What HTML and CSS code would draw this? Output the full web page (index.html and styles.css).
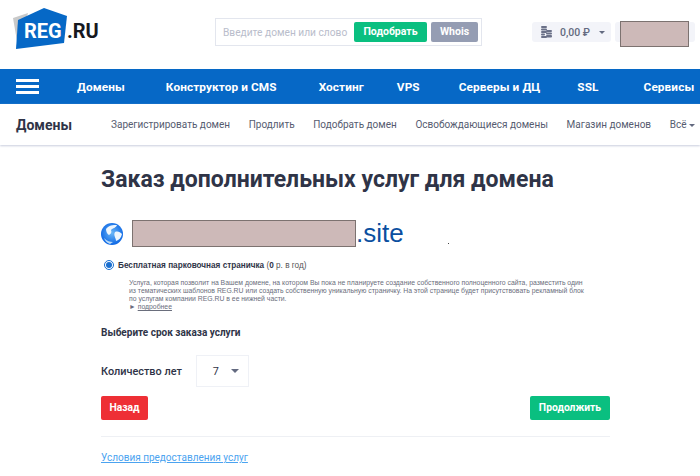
FILE: index.html
```html
<!DOCTYPE html>
<html lang="en">
<head>
  <meta charset="UTF-8">
  <meta name="viewport" content="width=device-width, initial-scale=1.0">
  <title>REG.RU</title>
  <link rel="stylesheet" href="styles.css">
</head>
<body>
  <header class="top">
    <svg class="logo" width="90" height="44" viewBox="0 0 90 44">
      <path d="M1 10 L16 5 L6 39 Z" fill="#c9c9c9"/>
      <path d="M6 12 L32 0 L55 8 L52 35 L4 41 Z" fill="#0668c6"/>
      <text x="12" y="30" class="logo-reg">REG</text>
      <text x="55" y="30" class="logo-ru">.RU</text>
    </svg>
    <form class="search">
      <span class="search-hint">Введите домен или слово</span>
      <span class="btn btn-green btn-small">Подобрать</span>
      <span class="btn btn-grey btn-small">Whois</span>
    </form>
    <div class="balance">
      <svg width="11" height="12" viewBox="0 0 11 12">
        <g fill="#6b7188">
          <rect x="0" y="0" width="6" height="2" rx="1"/>
          <rect x="0" y="2.5" width="6" height="2" rx="1"/>
          <rect x="0" y="5" width="6" height="2" rx="1"/>
          <rect x="0" y="7.5" width="4" height="2" rx="1"/>
          <rect x="0" y="10" width="6" height="2" rx="1"/>
          <rect x="5" y="4" width="6" height="2" rx="1"/>
          <rect x="5" y="6.5" width="6" height="2" rx="1"/>
          <rect x="5" y="9" width="6" height="2.5" rx="1"/>
        </g>
      </svg>
      <span>0,00 ₽</span>
      <i class="caret"></i>
    </div>
    <div class="user"><div class="mask mask-user"></div></div>
  </header>

  <nav class="mainnav">
    <div class="burger"><i></i><i></i><i></i></div>
    <div class="mainnav-items">
      <a>Домены</a>
      <a class="wider">Конструктор и CMS</a>
      <a class="tight">Хостинг</a>
      <a class="wide">VPS</a>
      <a class="mid">Серверы и ДЦ</a>
      <a class="widest">SSL</a>
      <a>Сервисы</a>
    </div>
  </nav>

  <nav class="subnav">
    <b>Домены</b>
    <div class="subnav-items">
      <a>Зарегистрировать домен</a>
      <a>Продлить</a>
      <a>Подобрать домен</a>
      <a>Освобождающиеся домены</a>
      <a>Магазин доменов</a>
      <a>Всё <i class="caret caret-dark"></i></a>
    </div>
  </nav>

  <main class="content">
    <h1>Заказ дополнительных услуг для домена</h1>

    <div class="domain">
      <svg class="globe" width="22" height="22" viewBox="0 0 22 22">
        <defs>
          <radialGradient id="globeFill" cx="0.5" cy="0.45" r="0.55">
            <stop offset="0" stop-color="#6db8f7"/>
            <stop offset="1" stop-color="#0c66e4"/>
          </radialGradient>
        </defs>
        <circle cx="11" cy="11" r="11" fill="url(#globeFill)"/>
        <path d="M5 6 C8 2 12 2 16 2 C15 5 12 5 10 7 C11 9 10 11 8 12 C6 11 5 8 5 6 Z" fill="#eef6fd"/>
        <path d="M14 9 C17 8 19 9 21 11 C20 15 18 17 15 18 C15 15 12 12 14 9 Z" fill="#eef6fd"/>
        <path d="M3 15 C6 18 9 19 12 19 L9 21 C6 20 4 18 3 15 Z" fill="#bcdcf8"/>
      </svg>
      <div class="mask mask-domain"></div>
      <span class="domain-zone">.site</span>
      <i class="speck"></i>
    </div>

    <label class="option">
      <input type="radio" checked>
      <span><b>Бесплатная парковочная страничка</b> (<b>0</b> р. в год)</span>
    </label>
    <div class="option-text">
      Услуга, которая позволит на Вашем домене, на котором Вы пока не планируете создание собственного полноценного сайта, разместить один<br>
      из тематических шаблонов REG.RU или создать собственную уникальную страничку. На этой странице будет присутствовать рекламный блок<br>
      по услугам компании REG.RU в ее нижней части.<br>
      <span class="more">► <u>подробнее</u></span>
    </div>

    <h3>Выберите срок заказа услуги</h3>

    <div class="years">
      <span>Количество лет</span>
      <div class="select">7 <i class="caret caret-big"></i></div>
    </div>

    <div class="actions">
      <span class="btn btn-red">Назад</span>
      <span class="btn btn-green">Продолжить</span>
    </div>

    <hr>
    <a class="terms">Условия предоставления услуг</a>
  </main>
</body>
</html>
```

FILE: styles.css
```css
body {
  margin: 0;
  height: 476px;
  overflow: hidden;
  background: #fff;
  font-family: Roboto, "Liberation Sans", sans-serif;
  color: #2f3447;
}
.top {
  display: flex;
  align-items: flex-start;
  height: 69px;
}
.logo {
  flex-shrink: 0;
  margin: 8px 0 0 12px;
}
.logo-reg {
  font: 700 20px Roboto, sans-serif;
  fill: #fff;
}
.logo-ru {
  font: 700 20px Roboto, sans-serif;
  fill: #16181f;
}
.search {
  display: flex;
  align-items: center;
  box-sizing: border-box;
  width: 267px;
  height: 28px;
  margin: 18px 0 0 113px;
  padding: 0 3px 0 7px;
  border: 1px solid #e3e6ee;
}
.search-hint {
  width: 131px;
  font-size: 10.2px;
  color: #b9bdcb;
  white-space: nowrap;
}
.btn {
  display: inline-block;
  border-radius: 2px;
  color: #fff;
  font-weight: 700;
  text-align: center;
}
.btn-small {
  height: 20px;
  line-height: 20px;
  font-size: 10.5px;
}
.btn-green {
  background: #0abf80;
}
.btn-grey {
  background: #959db3;
}
.search .btn-green {
  width: 73px;
  margin-right: 4px;
}
.search .btn-grey {
  width: 47px;
}
.balance {
  display: flex;
  align-items: center;
  box-sizing: border-box;
  width: 79px;
  height: 20px;
  margin: 22px 0 0 50px;
  padding-left: 9px;
  border-radius: 3px;
  background: #f3f4f9;
  font-size: 10.5px;
  font-weight: 500;
  color: #636a80;
}
.balance span {
  margin-left: 8px;
}
.caret {
  display: inline-block;
  margin-left: 9px;
  border-top: 3px solid #636a80;
  border-left: 3px solid transparent;
  border-right: 3px solid transparent;
}
.user {
  box-sizing: border-box;
  width: 80px;
  height: 20px;
  margin: 22px 0 0 4px;
  padding-left: 5px;
  border-radius: 3px;
  background: #f3f4f9;
}
.mask {
  box-sizing: border-box;
  border: 1px solid #7c7270;
  background: #cdb9b8;
}
.mask-user {
  width: 69px;
  height: 26px;
  margin-top: -1px;
}
.mainnav {
  display: flex;
  align-items: center;
  height: 35px;
  background: #0668c6;
  color: #fff;
}
.burger {
  display: flex;
  flex-direction: column;
  flex-shrink: 0;
  gap: 3px;
  width: 23px;
  margin-left: 16px;
}
.burger i {
  height: 3px;
  background: #fff;
}
.mainnav-items {
  display: flex;
  margin-left: 38px;
  font-size: 11.8px;
  font-weight: 700;
  letter-spacing: 0.1px;
  white-space: nowrap;
}
.mainnav-items a {
  margin-right: 41px;
}
.mainnav-items .wider {
  margin-right: 42px;
}
.mainnav-items .tight {
  margin-right: 33px;
}
.mainnav-items .wide {
  margin-right: 39px;
}
.mainnav-items .mid {
  margin-right: 37px;
}
.mainnav-items .widest {
  margin-right: 45px;
}
.subnav {
  display: flex;
  align-items: center;
  height: 41px;
  box-shadow: 0 1px 2px #c9cede;
  white-space: nowrap;
}
.subnav b {
  flex-shrink: 0;
  margin-left: 16px;
  font-size: 14px;
  font-weight: 700;
}
.subnav-items {
  display: flex;
  gap: 18.6px;
  margin-left: 39px;
  font-size: 10px;
  color: #565c70;
}
.caret-dark {
  margin-left: 0;
  vertical-align: middle;
}
.content {
  width: 509px;
  margin-left: 101px;
}
h1 {
  margin: 21px 0 0;
  font-size: 23px;
  line-height: 28px;
  font-weight: 700;
  white-space: nowrap;
}
.domain {
  display: flex;
  align-items: center;
  position: relative;
  height: 27px;
  margin-top: 26px;
}
.mask-domain {
  width: 224px;
  height: 27px;
  margin-left: 9px;
}
.domain-zone {
  font: 26px "Liberation Sans", sans-serif;
  color: #0b4fa0;
}
.speck {
  position: absolute;
  left: 347px;
  top: 23px;
  width: 1px;
  height: 1px;
  background: #444;
}
.option {
  display: flex;
  align-items: center;
  margin: 13px 0 0 3px;
  font: 8.2px "Liberation Sans", sans-serif;
  white-space: nowrap;
}
.option input {
  width: 10px;
  height: 10px;
  margin: 0 4px 0 0;
  accent-color: #1a6fd0;
}
.option span {
  color: #555;
}
.option b {
  color: #2f3447;
}
.option-text {
  margin: 9px 0 0 28px;
  font: 6.85px/8px "Liberation Sans", sans-serif;
  color: #6a6e7c;
  white-space: nowrap;
}
h3 {
  margin: 16px 0 0;
  font: 700 10px/12px Roboto, sans-serif;
}
.years {
  display: flex;
  align-items: center;
  margin-top: 16px;
  font-size: 10.9px;
  font-weight: 500;
}
.select {
  display: flex;
  align-items: center;
  box-sizing: border-box;
  width: 53px;
  height: 32px;
  margin-left: 14px;
  padding-left: 16px;
  border: 1px solid #eff1f6;
  font-weight: 400;
}
.caret-big {
  margin-left: 12px;
  border-top-width: 4px;
  border-left-width: 4px;
  border-right-width: 4px;
}
.actions {
  display: flex;
  justify-content: space-between;
  margin-top: 9px;
}
.actions .btn {
  height: 24px;
  line-height: 24px;
  font-size: 10.3px;
}
.btn-red {
  width: 47px;
  background: #ee2f35;
}
.actions .btn-green {
  width: 80px;
}
hr {
  height: 1px;
  margin: 16px 0 0;
  border: 0;
  background: #eef0f4;
}
.terms {
  display: block;
  margin-top: 15px;
  font-size: 10px;
  color: #4ba3f0;
  text-decoration: underline;
}
```
